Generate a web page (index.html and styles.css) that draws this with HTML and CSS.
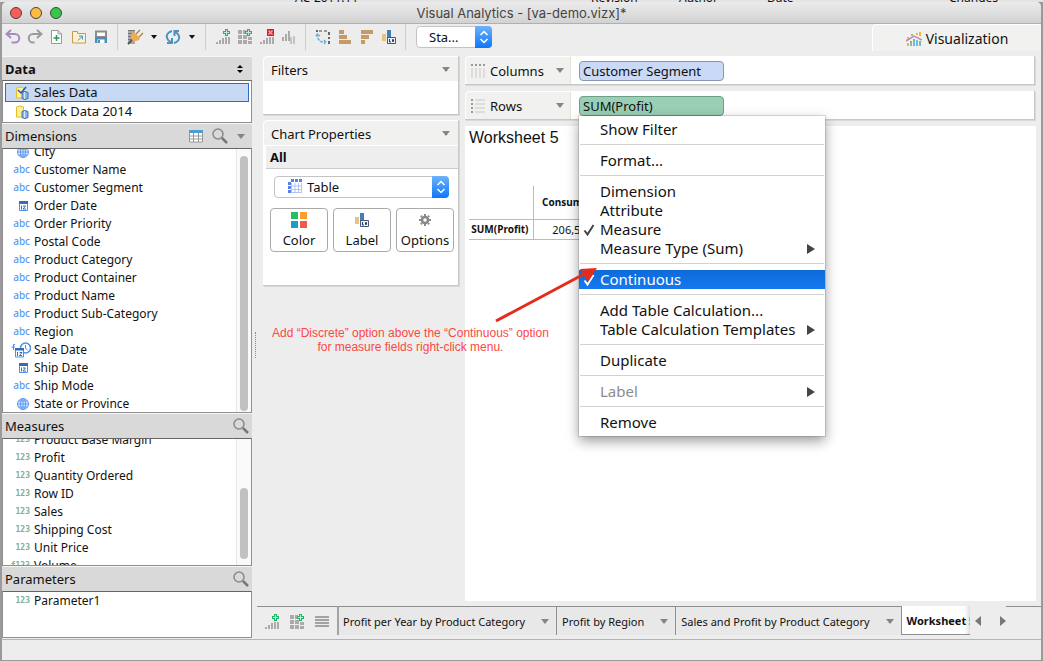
FILE: index.html
```html
<!DOCTYPE html>
<html lang="en">
<head>
    <meta charset="UTF-8">
    <meta name="viewport" content="width=device-width, initial-scale=1.0">
    <title>Visual Analytics - [va-demo.vizx]*</title>
    <link rel="stylesheet" href="styles.css">
</head>
<body>
    <!-- shared icons -->
    <svg class="sprite" aria-hidden="true">
        <symbol id="i-globe" viewBox="0 0 14 14"><circle cx="7" cy="7" r="5.500" fill="#dceafd"/><g fill="none" stroke="#5a9bf0"><circle cx="7" cy="7" r="5.5"/><ellipse cx="7" cy="7" rx="2.5" ry="5.5"/><path d="M7 1.5v11M1.5 7h11M2.5 4h9M2.5 10h9"/></g></symbol>
        <symbol id="i-date" viewBox="0 0 14 14"><path d="M3.500 2.500h8v9h-8z" fill="#fff" stroke="#4a8fe8"/><path d="M3 2h9v3H3z" fill="#2f6cc4"/><path d="M5.500 6.500v4M7 7h2.500L7 10h3" fill="none" stroke="#2f6cc4"/></symbol>
        <symbol id="i-search" viewBox="0 0 18 18"><circle cx="7" cy="7" r="5" fill="none" stroke="#8a8a8a" stroke-width="1.500"/><path d="M11 11l5 5" stroke="#777" stroke-width="2.500"/></symbol>
        <symbol id="i-bars-add" viewBox="0 0 16 16"><path d="M1 13h2v2H1zM4 11h2v4H4zM7 9h2v6H7zM10 8h2v7h-2zM13 8h2v7h-2z" fill="#aaa"/><path d="M10 0h3v2h2v3h-2v2h-3V5H8V2h2z" fill="#1fb56a"/><path d="M11.500 1v5M9 3.500h5" stroke="#b5f0cf"/></symbol>
        <symbol id="i-grid-add" viewBox="0 0 16 16"><path d="M1 1h4v4H1zM6 1h3v4H6zM1 6h4v4H1zM6 6h4v4H6zM11 8h4v3h-4zM1 11h4v4H1zM6 11h4v4H6zM11 12h4v3h-4z" fill="#aaa"/><path d="M10 0h3v2h2v3h-2v2h-3V5H8V2h2z" fill="#1fb56a"/><path d="M11.500 1v5M9 3.500h5" stroke="#b5f0cf"/></symbol>
        <symbol id="i-label" viewBox="0 0 16 16"><path d="M1 5h4v7H1z" fill="#e8c27e"/><path d="M6 1h4v8H6z" fill="#437fb5"/><path d="M6.500 8.500h8v6h-8z" fill="#eef3f9" stroke="#40597c"/><path d="M8.500 10v3H10M11.500 10.500h1v2h-1z" fill="none" stroke="#263c5c"/></symbol>
        <symbol id="i-db" viewBox="0 0 16 16"><path d="M2.500 3q3.500-2 7 0v10h-7z" fill="#fff09a" stroke="#e5bd27"/><path d="M8 7.500q3-2 6 0v6q-3 2-6 0z" fill="#8cb6e4" stroke="#3c73af"/><path d="M10.500 7v7" stroke="#d3e7f8"/></symbol>
        <symbol id="i-updown" viewBox="0 0 16 20"><path d="M4.500 8L8 4.500 11.500 8M4.500 12L8 15.500l3.500-3.500" fill="none" stroke="#fff" stroke-width="1.500"/></symbol>
        <symbol id="i-check" viewBox="0 0 12 12"><path d="M1.500 6.500l3 4 6-9.500" fill="none" stroke="currentColor" stroke-width="2"/></symbol>
    </svg>

    <!-- window behind, only a sliver is visible -->
    <div class="behind" aria-hidden="true">
        <span class="col-name">AC-2011.11</span><span class="col-rev">Revision</span><span class="col-author">Author</span><span class="col-date">Date</span><span>Changes</span>
    </div>

    <div class="window">
        <header class="titlebar">
            <div class="lights"><i class="red"></i><i class="yellow"></i><i class="green"></i></div>
            Visual Analytics - [va-demo.vizx]*
        </header>

        <div class="toolbar">
            <button class="tool" aria-label="Undo"><svg width="16" height="16" viewBox="0 0 16 16"><path d="M2 5h8a4 4 0 0 1 0 8.500H6.500M6 1L1.500 5 6 9" fill="none" stroke="#a98abf" stroke-width="2"/></svg></button>
            <button class="tool" aria-label="Redo"><svg width="16" height="16" viewBox="0 0 16 16"><path d="M14 5H6a4 4 0 0 0 0 8.500h1.500M10 1l4.500 4L10 9" fill="none" stroke="#9b9b9b" stroke-width="2"/></svg></button>
            <button class="tool" aria-label="New"><svg width="16" height="16" viewBox="0 0 16 16"><path d="M2.500 1.500H9L12.500 5v9.500h-10z" fill="#fff" stroke="#999"/><path d="M9 1.500V5h3.500" fill="none" stroke="#999"/><path d="M7.500 6v6M4.500 9h6" stroke="#2a9a50" stroke-width="1.500"/></svg></button>
            <button class="tool" aria-label="Open"><svg width="16" height="16" viewBox="0 0 16 16"><path d="M1.500 2.500h5v2h8v9.500h-13z" fill="#fdf3d2" stroke="#c69a4e"/><path d="M7 11.500l4-4M8 7h3.500v3.500" fill="none" stroke="#3c8fc0"/></svg></button>
            <button class="tool" aria-label="Save"><svg width="16" height="16" viewBox="0 0 16 16"><path d="M3 2.500h10V8H3z" fill="#fff" stroke="#8c8c8c" stroke-width="2"/><path d="M2 8h12v6H2z" fill="#4c8fba"/><path d="M4.500 10.500h7V14h-7z" fill="#fff"/><path d="M5 11h2v3H5z" fill="#4c8fba"/></svg></button>
            <span class="sep"></span>
            <button class="tool" aria-label="Connect data"><svg width="18" height="16" viewBox="0 0 18 16"><path d="M2 1h7v14H2z" fill="#aaa"/><path d="M2 1.500h7M2 4.500h7M2 7.500h7M2 10.500h5" stroke="#777"/><path d="M6 11l-4 4" stroke="#555" stroke-width="2"/><path d="M6 4l2-1 6 6-1 2-3 1H7l-2-3V6z" fill="#f0ab55"/><path d="M10 5l4-4M13 8l4-4" stroke="#b5893e" stroke-width="1.500"/></svg></button>
            <button class="caret-btn" aria-label="Connect options"><i class="caret dark"></i></button>
            <button class="tool" aria-label="Refresh"><svg width="16" height="16" viewBox="0 0 16 16"><path d="M7 2C3 3 1 6 2 9q1 3 4 4M2 14h5V9M9 14c4-1 6-4 5-7q-1-3-4-4M14 2H9.500v5" fill="none" stroke="#4c93bd" stroke-width="2"/></svg></button>
            <button class="caret-btn" aria-label="Refresh options"><i class="caret dark"></i></button>
            <span class="sep"></span>
            <button class="tool" aria-label="New worksheet"><svg width="16" height="16"><use href="#i-bars-add"/></svg></button>
            <button class="tool" aria-label="New dashboard"><svg width="16" height="16"><use href="#i-grid-add"/></svg></button>
            <button class="tool" aria-label="Clear sheet"><svg width="16" height="16" viewBox="0 0 16 16"><path d="M1 13h2v2H1zM4 11h2v4H4zM7 9h2v6H7zM10 8h2v7h-2zM13 8h2v7h-2z" fill="#aaa"/><path d="M8 0h7v7H8z" fill="#d4202a"/><path d="M9.500 1.500l4 4M13.500 1.500l-4 4" stroke="#f5a0a0" stroke-width="1.500"/></svg></button>
            <button class="tool" aria-label="Chart"><svg width="16" height="16" viewBox="0 0 16 16"><path d="M1 8h2v4H1zM4 5h2v7H4zM7 2h2v10H7z" fill="#aaa"/><path d="M9 8h2v7H9zM12 7h2v8h-2z" fill="#c2c2c2"/></svg></button>
            <span class="sep"></span>
            <button class="tool" aria-label="Swap"><svg width="16" height="16" viewBox="0 0 16 16"><path d="M1 1h2v2H1zM13 3h2v3h-2zM13 8h2v2h-2zM13 12h2v3h-2z" fill="#666"/><path d="M4 2h3M9 2h3" stroke="#999" stroke-width="2"/><path d="M2.500 5v3q1 5 8 5.500M1 7l1.500-2L5 7M9 11l2 2.500L9 15" fill="none" stroke="#68aed8" stroke-width="1.500" stroke-dasharray="3 1"/></svg></button>
            <button class="tool" aria-label="Sort ascending"><svg width="16" height="16" viewBox="0 0 16 16"><path d="M2 1h5v4H2zM2 6h8v4H2zM2 11h12v4H2z" fill="#c59a65"/></svg></button>
            <button class="tool" aria-label="Sort descending"><svg width="16" height="16" viewBox="0 0 16 16"><path d="M2 1h12v4H2zM2 6h8v4H2zM2 11h4v4H2z" fill="#c59a65"/></svg></button>
            <button class="tool" aria-label="Labels"><svg width="16" height="16"><use href="#i-label"/></svg></button>
            <span class="sep"></span>
            <div class="select fit">
                <select aria-label="Fit"><option>Sta...</option></select>
                <span class="arrows"><svg width="16" height="20"><use href="#i-updown"/></svg></span>
            </div>
            <button class="view-tab">
                <svg width="16" height="16" viewBox="0 0 16 16"><path d="M1 12h2v3H1zM5 3h2v2H5zM10 2h2v2h-2zM13 1h2v4h-2zM1 6h2v2H1z" fill="#f6b63c"/><path d="M4 12h2v3H4zM7 10h2v5H7zM10 9h2v6h-2zM13 12h2v3h-2z" fill="#68bdeb"/><path d="M4 10h2v2H4zM7 8h2v2H7zM13 10h2v2h-2zM5 3h2v1H5z" fill="#78bd74"/><path d="M0 10l8-5 8 4" fill="none" stroke="#c08ab5" stroke-width="1.500"/></svg>
                Visualization
            </button>
        </div>

        <main class="main">
            <aside class="sidebar">
                <h2 class="head data-head">Data <svg width="8" height="12" viewBox="0 0 8 12"><path d="M4 2l3 3H1zM4 10l3-3H1z"/></svg></h2>
                <ul class="list sources">
                    <li class="selected"><svg width="16" height="16"><use href="#i-db"/><path d="M4 5l3 3 5-6" fill="none" stroke="#245b9b" stroke-width="1.500"/></svg>Sales Data</li>
                    <li><svg width="16" height="16"><use href="#i-db"/></svg>Stock Data 2014</li>
                </ul>

                <h2 class="head">Dimensions
                    <span class="head-icons">
                        <svg width="14" height="14" viewBox="0 0 14 14"><path d="M.5 1.500h13v11.500H.5zM.5 7h13M.5 10h13M4.500 3v10M9.500 3v10" fill="#fff" stroke="#999"/><path d="M0 1h14v3H0z" fill="#4b9fd2"/></svg>
                        <svg width="18" height="18"><use href="#i-search"/></svg>
                        <i class="caret"></i>
                    </span>
                </h2>
                <div class="list scroll dimensions">
                    <ul>
                        <li><svg width="14" height="14"><use href="#i-globe"/></svg>City</li>
                        <li><b class="abc">abc</b>Customer Name</li>
                        <li><b class="abc">abc</b>Customer Segment</li>
                        <li><svg width="14" height="14"><use href="#i-date"/></svg>Order Date</li>
                        <li><b class="abc">abc</b>Order Priority</li>
                        <li><b class="abc">abc</b>Postal Code</li>
                        <li><b class="abc">abc</b>Product Category</li>
                        <li><b class="abc">abc</b>Product Container</li>
                        <li><b class="abc">abc</b>Product Name</li>
                        <li><b class="abc">abc</b>Product Sub-Category</li>
                        <li><b class="abc">abc</b>Region</li>
                        <li><svg class="wide" width="20" height="16" viewBox="0 0 20 16"><circle cx="14.500" cy="6" r="5" fill="#fff" stroke="#4a8fe8" stroke-width="1.500"/><path d="M14.500 3v3.500l2 1.500" fill="none" stroke="#4a8fe8"/><path d="M4.500 6.500h8V15h-8z" fill="#fff" stroke="#4a8fe8"/><path d="M4 6h9v2.500H4z" fill="#2f6cc4"/><path d="M6.500 10v4M8.500 10.500H11L8.500 13.500H11" fill="none" stroke="#2f6cc4"/><path d="M4 2.500H2.500V8M.5 5h3.500" fill="none" stroke="#4a8fe8"/></svg>Sale Date</li>
                        <li><svg width="14" height="14"><use href="#i-date"/></svg>Ship Date</li>
                        <li><b class="abc">abc</b>Ship Mode</li>
                        <li><svg width="14" height="14"><use href="#i-globe"/></svg>State or Province</li>
                    </ul>
                    <div class="track"><i></i></div>
                </div>

                <h2 class="head">Measures <svg width="18" height="18"><use href="#i-search"/></svg></h2>
                <div class="list scroll measures">
                    <ul>
                        <li><b class="num">123</b>Product Base Margin</li>
                        <li><b class="num">123</b>Profit</li>
                        <li><b class="num">123</b>Quantity Ordered</li>
                        <li><b class="num">123</b>Row ID</li>
                        <li><b class="num">123</b>Sales</li>
                        <li><b class="num">123</b>Shipping Cost</li>
                        <li><b class="num">123</b>Unit Price</li>
                        <li><b class="num">f123</b>Volume</li>
                    </ul>
                    <div class="track"><i></i></div>
                </div>

                <h2 class="head">Parameters <svg width="18" height="18"><use href="#i-search"/></svg></h2>
                <ul class="list parameters">
                    <li><b class="num">123</b>Parameter1</li>
                </ul>
            </aside>

            <div class="right">
                <div class="workspace">
                    <div class="splitter"><i></i></div>
                    <div class="cards">
                        <section class="card">
                            <h2>Filters <i class="caret"></i></h2>
                            <div class="filters"></div>
                        </section>
                        <section class="card">
                            <h2>Chart Properties <i class="caret"></i></h2>
                            <h3>All</h3>
                            <div class="props">
                                <div class="select chart-type">
                                    <svg width="16" height="16" viewBox="0 0 16 16"><path d="M1 4h14v11H1z" fill="#fff"/><path d="M4.500 5v10M8 5v10M11.500 5v10M14.500 5v10M4 8h11M4 11.500h11M4 14.500h11" stroke="#b4c4f4"/><path d="M4 1h3v3H4zM8 1h3v3H8zM12 1h3v3h-3zM1 4h3v3H1zM1 8h3v3H1zM1 12h3v3H1z" fill="#5a80e6"/></svg>
                                    <select aria-label="Chart type"><option>Table</option></select>
                                    <span class="arrows"><svg width="16" height="20"><use href="#i-updown"/></svg></span>
                                </div>
                                <div class="prop-buttons">
                                    <button><svg width="16" height="16" viewBox="0 0 16 16"><path d="M0 0h7v7H0z" fill="#1fc06a"/><path d="M9 0h7v7H9z" fill="#fb9c2c"/><path d="M0 9h7v7H0z" fill="#1b9dcb"/><path d="M9 9h7v7H9z" fill="#ee5a4b"/></svg>Color</button>
                                    <button><svg width="16" height="16"><use href="#i-label"/></svg>Label</button>
                                    <button><svg width="16" height="16" viewBox="0 0 16 16"><circle cx="8" cy="8" r="3" fill="none" stroke="#888" stroke-width="2.500"/><path d="M8 2v2M8 12v2M2 8h2M12 8h2M3.800 3.800L5 5M11 11l1.200 1.200M3.800 12.200L5 11M11 5l1.200-1.200" stroke="#888" stroke-width="2"/></svg>Options</button>
                                </div>
                            </div>
                        </section>
                    </div>

                    <div class="canvas">
                        <div class="shelf">
                            <h2><svg width="14" height="14" viewBox="0 0 14 14"><path d="M1 0v2M5 0v2M9 0v2M13 0v2" stroke="#999" stroke-width="2"/><path d="M1 4v10M5 4v10M9 4v10M13 4v10" stroke="#ddd" stroke-width="2"/></svg>Columns <i class="caret"></i></h2>
                            <div class="drop"><button class="pill blue">Customer Segment</button></div>
                        </div>
                        <div class="shelf">
                            <h2><svg width="14" height="14" viewBox="0 0 14 14"><path d="M0 1h2M0 5h2M0 9h2M0 13h2" stroke="#999" stroke-width="2"/><path d="M4 1h10M4 5h10M4 9h10M4 13h10" stroke="#ddd" stroke-width="2"/></svg>Rows <i class="caret"></i></h2>
                            <div class="drop">
                                <div class="pill-menu">
                                    <button class="pill green">SUM(Profit)</button>
                                    <div class="menu" role="menu">
                                        <button role="menuitem">Show Filter</button>
                                        <hr>
                                        <button role="menuitem">Format...</button>
                                        <hr>
                                        <button role="menuitem">Dimension</button>
                                        <button role="menuitem">Attribute</button>
                                        <button role="menuitemradio" aria-checked="true"><svg class="tick" width="12" height="12"><use href="#i-check"/></svg>Measure</button>
                                        <button role="menuitem">Measure Type (Sum)<i class="sub"></i></button>
                                        <hr>
                                        <button role="menuitemradio" aria-checked="true" class="active"><svg class="tick" width="12" height="12"><use href="#i-check"/></svg>Continuous</button>
                                        <hr>
                                        <button role="menuitem">Add Table Calculation...</button>
                                        <button role="menuitem">Table Calculation Templates<i class="sub"></i></button>
                                        <hr>
                                        <button role="menuitem">Duplicate</button>
                                        <hr>
                                        <button role="menuitem" disabled>Label<i class="sub"></i></button>
                                        <hr>
                                        <button role="menuitem">Remove</button>
                                    </div>
                                </div>
                            </div>
                        </div>
                        <section class="sheet">
                            <h1>Worksheet 5</h1>
                            <table>
                                <tr><td></td><th>Consumer</th></tr>
                                <tr><th>SUM(Profit)</th><td>206,506</td></tr>
                            </table>
                        </section>
                    </div>

                    <!-- review note over the workspace -->
                    <div class="note">
                        <svg width="104" height="58" viewBox="0 0 104 58"><path d="M2 53L92 5" stroke="#e32d1c" stroke-width="3"/><path d="M103 0L86 1l8 13z" fill="#e32d1c"/></svg>
                        <p>Add “Discrete” option above the “Continuous” option<br>for measure fields right-click menu.</p>
                    </div>
                </div>

                <nav class="tabs">
                    <div class="tab-tools">
                        <button class="tool" aria-label="Add worksheet"><svg width="16" height="16"><use href="#i-bars-add"/></svg></button>
                        <button class="tool" aria-label="Add dashboard"><svg width="16" height="16"><use href="#i-grid-add"/></svg></button>
                        <button class="tool" aria-label="Sheet list"><svg width="16" height="16" viewBox="0 0 16 16"><path d="M1 3h14M1 6h14M1 9h14M1 12h14" stroke="#a2a2a2" stroke-width="2"/></svg></button>
                    </div>
                    <button class="tab first">Profit per Year by Product Category <i class="caret"></i></button>
                    <button class="tab">Profit by Region <i class="caret"></i></button>
                    <button class="tab">Sales and Profit by Product Category <i class="caret"></i></button>
                    <button class="tab current">Worksheet 5</button>
                    <div class="tab-nav">
                        <button aria-label="Previous"><svg width="6" height="10"><path d="M6 0v10L0 5z" fill="#777"/></svg></button>
                        <button aria-label="Next"><svg width="6" height="10"><path d="M0 0v10l6-5z" fill="#777"/></svg></button>
                    </div>
                    <div class="tab-rest"></div>
                </nav>
            </div>
        </main>

        <footer class="status"></footer>
    </div>
</body>
</html>
```
FILE: styles.css
```css
* {
    box-sizing: border-box;
}
body {
    margin: 0;
    height: 100vh;
    display: flex;
    flex-direction: column;
    overflow: hidden;
    background-color: #9a9a9a;
    font-family: "Noto Sans", "Open Sans", sans-serif;
    font-size: 12px;
    color: #111;
}
h1, h2, h3, ul, p {
    margin: 0;
    padding: 0;
    font-weight: normal;
}
ul {
    list-style: none;
}
svg {
    flex: none;
}
button, select {
    font: inherit;
    color: inherit;
    border: 0;
    padding: 0;
    margin: 0;
    background: none;
}
.sprite {
    position: absolute;
    width: 0;
    height: 0;
}
.behind {
    flex: none;
    height: 2px;
    overflow: hidden;
    display: flex;
    align-items: flex-end;
    padding-left: 295px;
    line-height: 8px;
    background-color: #e4e4e4;
}
.col-name { width: 296px; }
.col-rev { width: 88px; }
.col-author { width: 88px; }
.col-date { width: 182px; }

.window {
    flex: 1;
    min-height: 0;
    margin: 0 2px 1px;
    display: flex;
    flex-direction: column;
    background-color: #ededed;
    border-radius: 5px 5px 0 0;
}
.titlebar {
    flex: none;
    display: grid;
    grid-template-columns: 1fr auto 1fr;
    align-items: center;
    height: 22px;
    border-bottom: 1px solid #b0b0b0;
    border-radius: 5px 5px 0 0;
    background: linear-gradient(#ebebeb, #d2d2d2);
    font-family: Inter, "Liberation Sans", sans-serif;
    font-size: 13px;
    color: #444;
}
.lights {
    display: flex;
    gap: 8px;
    padding-left: 8px;
}
.lights i {
    width: 12px;
    height: 12px;
    border-radius: 50%;
    border: 1px solid;
}
.red { background-color: #fc5b57; border-color: #e0443e; }
.yellow { background-color: #fdbc40; border-color: #e0a035; }
.green { background-color: #34c84a; border-color: #27a737; }

/* toolbar */
.toolbar {
    flex: none;
    display: flex;
    height: 32px;
}
.tool {
    width: 22px;
    height: 26px;
    display: flex;
    align-items: center;
    justify-content: center;
}
.caret-btn {
    width: 16px;
    height: 26px;
    display: flex;
    align-items: center;
    justify-content: center;
}
.caret {
    flex: none;
    width: 0;
    height: 0;
    border: 4px solid transparent;
    border-top: 5px solid #858585;
    border-bottom: 0;
}
.caret.dark {
    border-width: 4px 3px 0;
    border-top-color: #111;
}
.sep {
    width: 12px;
    height: 26px;
    background: linear-gradient(#ccc, #ccc) 5px 0 / 1px 100% no-repeat;
}
.select {
    display: flex;
    height: 22px;
    border: 1px solid #c4c4c4;
    border-radius: 4px;
    background-color: #fff;
}
.select select {
    flex: 1;
    min-width: 0;
    appearance: none;
    font-size: 13px;
}
.arrows {
    width: 17px;
    margin: -1px -1px -1px 0;
    border-radius: 0 4px 4px 0;
    background: linear-gradient(#6cb2fa, #0f77fb);
    display: flex;
    align-items: center;
    justify-content: center;
}
.fit {
    width: 76px;
    margin: 2px 0 0 4px;
}
.fit select {
    padding-left: 12px;
}
.view-tab {
    width: 169px;
    height: 27px;
    margin-left: auto;
    padding-top: 2px;
    display: flex;
    align-items: center;
    justify-content: center;
    gap: 4px;
    border-top: 1px solid #fff;
    border-left: 1px solid #fff;
    border-radius: 5px 0 0 0;
    background-color: #f1f1ef;
    line-height: 18px;
    font-size: 14px;
}

/* sidebar */
.main {
    flex: 1;
    min-height: 0;
    display: flex;
}
.sidebar {
    width: 250px;
    flex: none;
    display: flex;
    flex-direction: column;
    padding-bottom: 1px;
}
.head {
    flex: none;
    height: 25px;
    padding: 0 2px 0 3px;
    display: flex;
    align-items: center;
    justify-content: space-between;
    border-top: 1px solid #f6f6f6;
    background-color: #d9d9d9;
    font-size: 13px;
}
.head.data-head {
    height: 24px;
    padding-right: 8px;
    font-weight: bold;
}
.head-icons {
    display: flex;
    align-items: center;
    gap: 8px;
    margin-right: 5px;
}
.list {
    border: 1px solid #8f8f8f;
    border-top-color: #666;
    background-color: #fff;
}
.list li {
    display: grid;
    grid-template-columns: 31px auto;
    align-items: center;
    height: 18px;
    line-height: 18px;
    white-space: nowrap;
}
.list li svg {
    justify-self: end;
    margin-right: 4px;
}
.list li .wide {
    margin-right: 3px;
}
.sources {
    flex: none;
    padding: 2px 2px 1px;
    font-size: 13px;
}
.list.sources li {
    grid-template-columns: 28px auto;
    height: 19px;
    line-height: 17px;
    border: 1px solid transparent;
}
.list.sources .selected {
    border-color: #2f6cc4;
    background-color: #c8d9f4;
}
.scroll {
    display: flex;
    justify-content: space-between;
    min-height: 0;
    overflow: hidden;
}
.dimensions { flex: 267 0 0; }
.measures { flex: 127 0 0; }
.parameters { flex: 46 0 0; }
.scroll ul {
    margin-top: -6px;
}
.measures ul {
    margin-top: -8px;
}
.abc, .num {
    justify-self: end;
    margin-right: 4px;
    line-height: 14px;
    font-weight: normal;
    color: #5a9bf0;
}
.abc {
    padding-bottom: 2px;
    font-size: 10px;
    font-weight: 500;
}
.num {
    font-family: "DejaVu Sans Mono", monospace;
    font-size: 8px;
    font-weight: bold;
    color: #7cb096;
}
.track {
    width: 15px;
    padding: 7px 3px 1px;
    border-left: 1px solid #e6e6e6;
    background-color: #fafafa;
    display: flex;
}
.track i {
    width: 8px;
    border-radius: 4px;
    background-color: #c1c1c1;
}
.measures .track {
    padding: 49px 3px 6px;
}

/* workspace */
.right {
    flex: 1;
    min-width: 0;
    display: flex;
    flex-direction: column;
}
.workspace {
    flex: 1;
    min-height: 0;
    display: flex;
    position: relative;
}
.splitter {
    width: 11px;
    display: flex;
    align-items: center;
    padding: 28px 0 0 3px;
}
.splitter i {
    height: 26px;
    border-left: 1px dotted #888;
}
.cards {
    width: 196px;
    flex: none;
    display: flex;
    flex-direction: column;
    gap: 5px;
}
.card {
    background-color: #fff;
    border-radius: 5px 0 0 0;
    border-right: 1px solid #c8c8c8;
    border-bottom: 1px solid #c8c8c8;
    box-shadow: 1px 1px 0 #d8d8d8;
}
.card h2 {
    height: 25px;
    padding: 1px 8px 0 7px;
    display: flex;
    align-items: center;
    justify-content: space-between;
    background-color: #f1f1ef;
    border-top: 1px solid #fff;
    border-left: 1px solid #fff;
    border-radius: 5px 0 0 0;
    font-size: 13px;
}
.card h3 {
    margin-left: 3px;
    padding-left: 4px;
    border-top: 1px solid #fff;
    border-bottom: 1px solid #ccc;
    background-color: #eeeeef;
    line-height: 22px;
    font-size: 13px;
    font-weight: bold;
}
.filters {
    height: 33px;
}
.props {
    padding: 7px 4px 33px 7px;
}
.chart-type {
    margin: 0 5px 10px 4px;
    padding-left: 12px;
}
.chart-type > svg {
    margin-top: 1px;
}
.chart-type select {
    padding-left: 4px;
}
.prop-buttons {
    display: grid;
    grid-template-columns: repeat(3, 1fr);
    gap: 5px;
}
.prop-buttons button {
    height: 44px;
    border: 1px solid #aaa;
    border-radius: 4px;
    display: flex;
    flex-direction: column;
    align-items: center;
    gap: 3px;
    padding-top: 3px;
    line-height: 18px;
    font-size: 13px;
}

.canvas {
    flex: 1;
    min-width: 0;
    margin: 0 5px 5px 6px;
    display: flex;
    flex-direction: column;
    gap: 6px;
}
.shelf {
    flex: none;
    height: 29px;
    margin-right: 1px;
    display: flex;
    background-color: #fff;
    border-right: 1px solid #c8c8c8;
    border-bottom: 1px solid #c8c8c8;
    border-radius: 5px 0 0 0;
    box-shadow: 1px 1px 0 #d8d8d8;
}
.shelf h2 {
    width: 106px;
    padding: 0 6px 0 5px;
    display: flex;
    align-items: center;
    gap: 5px;
    background-color: #f1f1ef;
    border: 1px solid #fff;
    border-right-color: #e6e3d4;
    border-bottom: 0;
    border-radius: 5px 0 0 0;
    font-size: 13px;
}
.shelf h2 .caret {
    margin-left: auto;
}
.drop {
    padding: 5px 0 0 8px;
}
.pill {
    display: block;
    width: 145px;
    height: 20px;
    padding-left: 3px;
    border: 1px solid;
    border-radius: 4px;
    line-height: 18px;
    font-size: 13px;
    text-align: left;
}
.pill.blue { background-color: #cad9f5; border-color: #8796b3; }
.pill.green { background-color: #9acfb5; border-color: #6f9f88; }
.sheet {
    flex: 1;
    padding: 2px 4px;
    background-color: #fff;
}
.sheet h1 {
    font-family: "Liberation Sans", Arial, sans-serif;
    font-size: 16px;
    line-height: 20px;
}
.sheet table {
    margin-top: 38px;
    border-collapse: collapse;
    font-size: 11px;
    line-height: 19px;
}
.sheet td, .sheet th {
    width: 64px;
    padding: 0 4px 0 1px;
    border-bottom: 1px solid #bbb;
    text-align: right;
}
.sheet th {
    font-size: 10px;
}
.sheet tr > :first-child {
    border-right: 1px solid #bbb;
}
.sheet tr:first-child > * {
    height: 33px;
}
.sheet th + td, .sheet td + th {
    padding-left: 4px;
}

/* context menu */
.pill-menu {
    position: relative;
}
.menu {
    position: absolute;
    z-index: 1;
    top: 100%;
    left: 0;
    width: 246px;
    padding: 4px 0;
    background-color: #fff;
    box-shadow: 0 0 0 1px rgba(0,0,0,0.12), 0 5px 12px rgba(0,0,0,0.4);
    font-size: 15px;
}
.menu button {
    position: relative;
    display: flex;
    align-items: center;
    justify-content: space-between;
    width: 100%;
    height: 19px;
    padding: 0 10px 0 21px;
    line-height: 19px;
    text-align: left;
}
.menu hr {
    margin: 5px 1px 6px;
    border: 0;
    border-top: 1px solid #d2d2d2;
}
.menu .tick {
    position: absolute;
    left: 4px;
    top: 4px;
    color: #444;
}
.menu .sub {
    border: 5px solid transparent;
    border-left: 8px solid #444;
    border-right: 0;
}
.menu .active {
    background: linear-gradient(#0e6ad8, #1478f0);
    color: #fff;
}
.menu .active .tick {
    color: #fff;
}
.menu button:disabled {
    color: #8c8c8c;
}

.note {
    position: absolute;
    z-index: 2;
    left: 20px;
    top: 212px;
    color: #fb4844;
    font-family: "Liberation Sans", Arial, sans-serif;
    line-height: 14px;
    text-align: center;
    white-space: nowrap;
    pointer-events: none;
}
.note svg {
    display: block;
    margin: 0 -50px 0 222px;
}

/* sheet tabs */
.tabs {
    flex: none;
    display: flex;
    height: 33px;
    margin-left: 5px;
}
.tabs > * {
    border-top: 1px solid #8f8f8f;
}
.tab-tools {
    width: 80px;
    display: flex;
    gap: 3px;
    padding: 2px 0 0 4px;
}
.tab {
    flex: none;
    display: flex;
    align-items: center;
    gap: 16px;
    height: 29px;
    padding: 0 7px 0 5px;
    border-right: 1px solid #8f8f8f;
    background-color: #e8e8e8;
    font-size: 11px;
}
.tab.first {
    padding-left: 4px;
    border-left: 2px solid #a4a4a4;
}
.tab.current {
    display: block;
    width: 68px;
    overflow: hidden;
    white-space: nowrap;
    background: linear-gradient(to right, #fff 92%, #dedede);
    border-top: 0;
    border-right: 0;
    border-bottom: 1px solid #8f8f8f;
    padding-right: 0;
    font-weight: bold;
    text-align: left;
}
.tabs .tab-nav {
    flex: none;
    display: flex;
    align-items: center;
    gap: 19px;
    height: 30px;
    padding: 0 0 0 5px;
    border-top: 0;
}
.tab-nav svg {
    display: block;
}
.tab-rest {
    flex: 1;
}
.status {
    flex: none;
    height: 21px;
    border-top: 1px solid #b4b4b4;
}
```
